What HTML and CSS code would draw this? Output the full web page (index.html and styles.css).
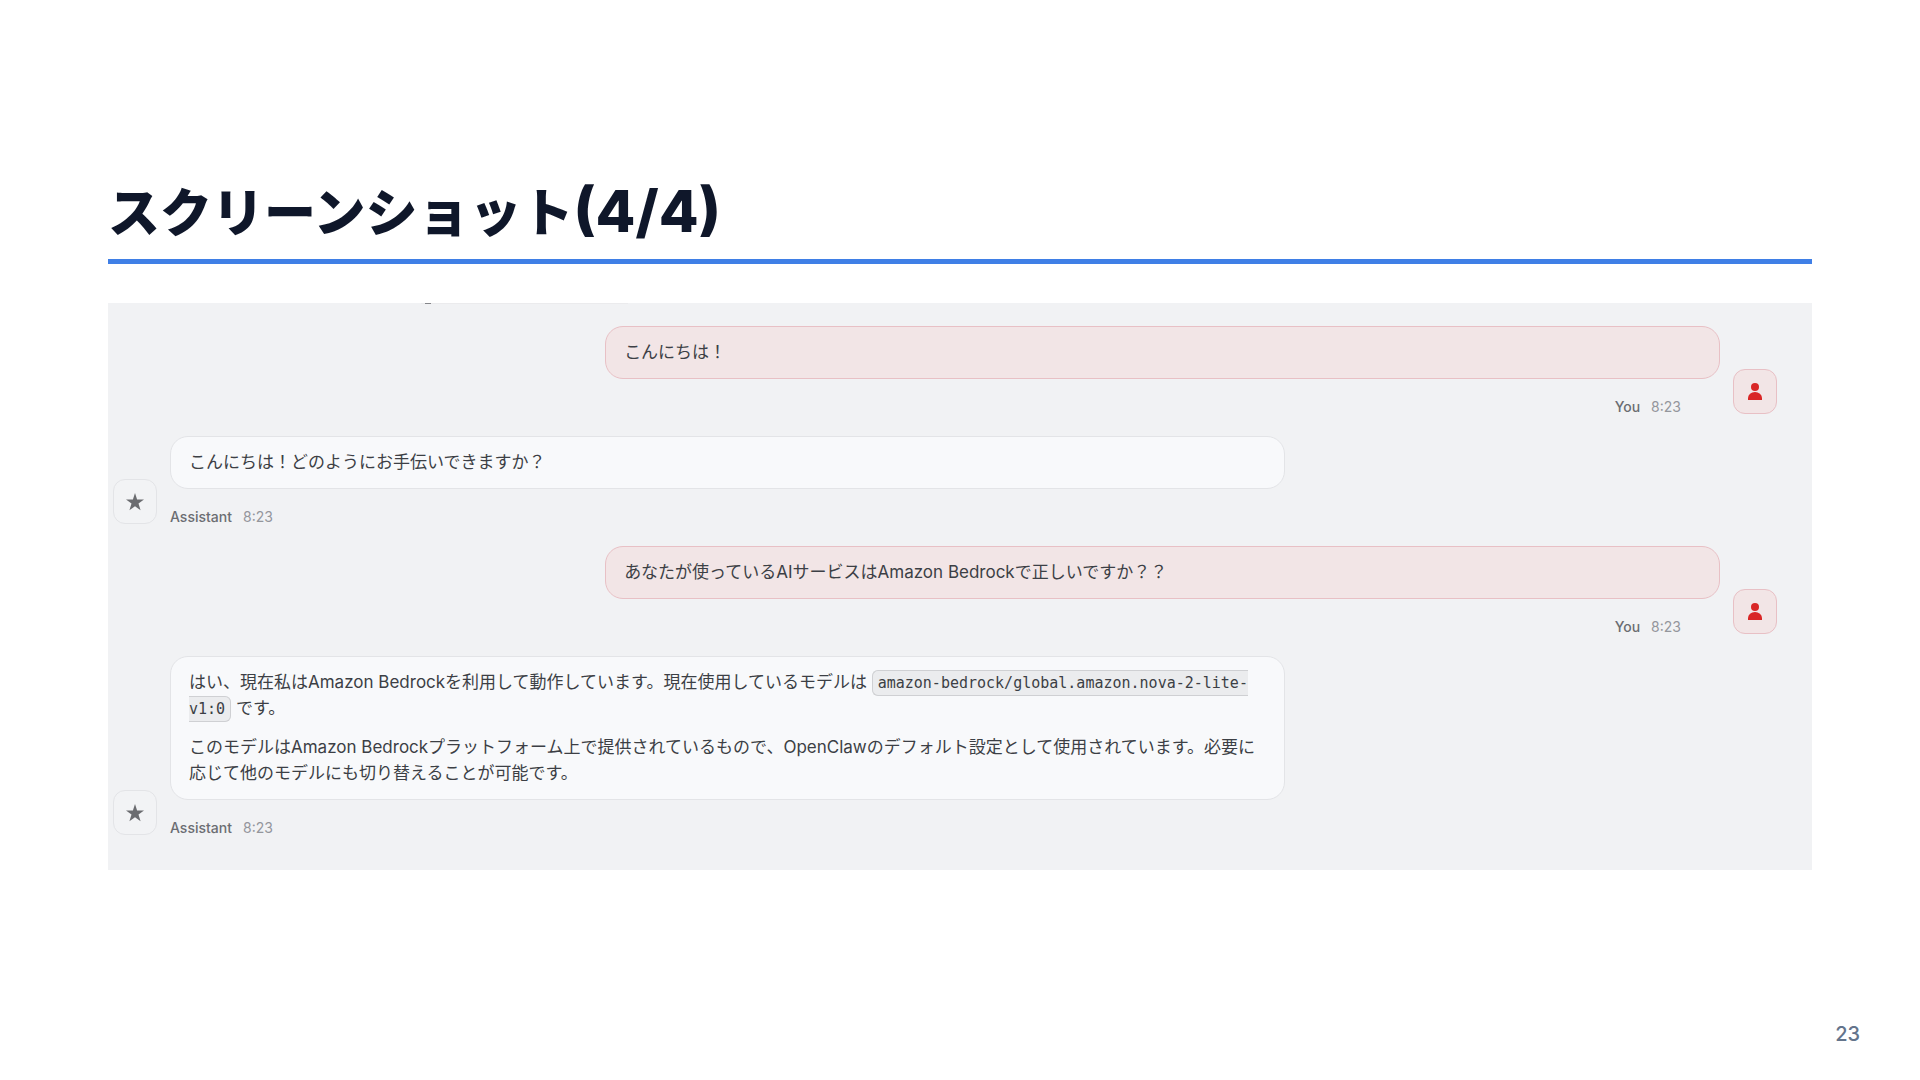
FILE: index.html
```html
<!DOCTYPE html>
<html lang="ja">
<head>
<meta charset="utf-8">
<title>スクリーンショット(4/4)</title>
<link rel="stylesheet" href="styles.css">
</head>
<body>
<svg class="sprite" aria-hidden="true">
  <symbol id="person" viewBox="0 0 18 20"><circle cx="9" cy="5" r="4"/><path d="M2 18v-2a7 6 0 0 1 14 0v2z"/></symbol>
  <symbol id="star" viewBox="0 0 20 20"><path d="M10 1l2.1 6.5H19l-5.5 4.1 2.1 6.7L10 14.2l-5.6 4.1 2.1-6.7L1 7.500h6.900z"/></symbol>
</svg>
<main class="slide">
  <h1 class="title">スクリーンショット<span class="count">(4/4)</span></h1>
  <section class="chat">
    <div class="row user">
      <div class="group">
        <div class="bubble"><p>こんにちは！</p></div>
        <div class="meta"><span class="name">You</span><time>8:23</time></div>
      </div>
      <div class="avatar"><svg width="18" height="20"><use href="#person"/></svg></div>
    </div>
    <div class="row assistant">
      <div class="avatar"><svg width="20" height="20"><use href="#star"/></svg></div>
      <div class="group">
        <div class="bubble"><p>こんにちは！どのようにお手伝いできますか？</p></div>
        <div class="meta"><span class="name">Assistant</span><time>8:23</time></div>
      </div>
    </div>
    <div class="row user">
      <div class="group">
        <div class="bubble"><p>あなたが使っているAIサービスはAmazon Bedrockで正しいですか？？</p></div>
        <div class="meta"><span class="name">You</span><time>8:23</time></div>
      </div>
      <div class="avatar"><svg width="18" height="20"><use href="#person"/></svg></div>
    </div>
    <div class="row assistant">
      <div class="avatar"><svg width="20" height="20"><use href="#star"/></svg></div>
      <div class="group">
        <div class="bubble">
          <p>はい、現在私はAmazon Bedrockを利用して動作しています。現在使用しているモデルは <code>amazon-bedrock/global.amazon.nova-2-lite-<wbr>v1:0</code> です。</p>
          <p>このモデルはAmazon Bedrockプラットフォーム上で提供されているもので、OpenClawのデフォルト設定として使用されています。必要に応じて他のモデルにも切り替えることが可能です。</p>
        </div>
        <div class="meta"><span class="name">Assistant</span><time>8:23</time></div>
      </div>
    </div>
  </section>
  <footer class="page-number">23</footer>
</main>
</body>
</html>
```
FILE: styles.css
```css
* { box-sizing: border-box; }
body {
  margin: 0;
  background: #fff;
  color: #3c3f45;
  font-family: Inter, "Noto Sans CJK JP", sans-serif;
}
p, h1 { margin: 0; }
.sprite { position: absolute; width: 0; height: 0; }
.slide {
  min-height: 100vh;
  display: flex;
  flex-direction: column;
  padding: 170px 108px 32px;
}
.title {
  padding-bottom: 9px;
  border-bottom: 5px solid #3f7fe6;
  color: #0f172a;
  font: 900 52px/80px "Noto Sans CJK JP", sans-serif;
}
.count { font: 800 58px/1 Inter, sans-serif; }
.chat {
  display: flex;
  flex-direction: column;
  gap: 22px;
  margin-top: 39px;
  padding: 23px 35px 35px 5px;
  /* lower edge of the previous message, cut off by the scroll area */
  background:
    linear-gradient(#85868a, #85868a) 317px 0 / 6px 1px no-repeat,
    linear-gradient(#ebebed, #ebebed) 313px 0 / 207px 1px no-repeat,
    #f1f2f4;
}
.row { display: flex; align-items: flex-end; gap: 13px; }
.user { justify-content: flex-end; }
.group { flex: 0 0 67%; min-width: 0; }
.bubble {
  padding: 12px 18px 13px;
  border: 1px solid #e3e4e7;
  border-radius: 18px;
  background: #f8f9fb;
  font-size: 17px;
  line-height: 26px;
}
.bubble p + p { margin-top: 13px; }
.user .bubble, .user .avatar { background: #f2e5e6; border-color: #e8c0c5; }
.meta {
  display: flex;
  gap: 11px;
  margin-top: 20px;
  color: #94969c;
  font-size: 14px;
  line-height: 15px;
}
.user .meta { justify-content: flex-end; padding-right: 39px; }
.name { color: #6b6d72; font-weight: 500; }
.avatar {
  flex: none;
  display: grid;
  place-items: center;
  width: 44px;
  height: 45px;
  border: 1px solid #e3e4e7;
  border-radius: 12px;
  background: #f2f3f5;
  fill: #6b6c70;
}
.user .avatar { fill: #d92626; }
code {
  padding: 3px 5px;
  border: 1px solid #cfd0d3;
  border-radius: 6px;
  background: #ebecee;
  font: 15px/20px "DejaVu Sans Mono", monospace;
}
.page-number {
  margin: auto -48px 0 0;
  text-align: right;
  color: #64748b;
  font-size: 20px;
  font-weight: 500;
  line-height: 28px;
}
```
